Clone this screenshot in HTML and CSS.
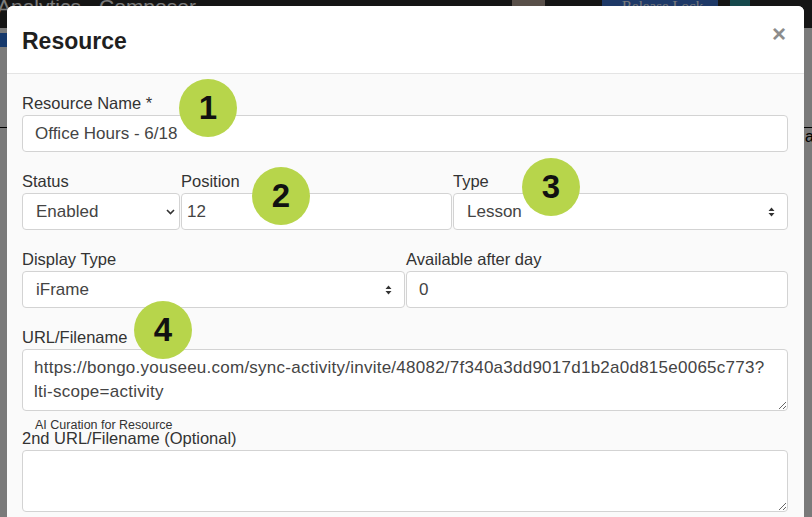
FILE: index.html
```html
<!DOCTYPE html>
<html lang="en">
<head>
    <meta charset="UTF-8">
    <meta name="viewport" content="width=device-width, initial-scale=1.0">
    <title>Resource</title>
    <link rel="stylesheet" href="styles.css">
</head>
<body>
    <!-- page behind the dialog -->
    <div class="app-bar">
        <span class="app-tab">Analytics</span>
        <span class="app-tab">Composer</span>
        <span class="app-spacer"></span>
        <span class="app-avatar"></span>
        <span class="lock-btn">Release Lock</span>
        <span class="app-thumb"></span>
    </div>
    <div class="app-sub">
        <span class="app-sub-btn"></span>
    </div>
    <div class="app-rule"></div>
    <div class="app-text">ar</div>

    <div class="backdrop"></div>

    <!-- Modal -->
    <div class="modal">
        <div class="modal-header">
            <h2 class="modal-title">Resource</h2>
            <span class="close-button">&times;</span>
        </div>

        <form class="modal-body">
            <div class="form-field">
                <label for="resName">Resource Name *</label>
                <input type="text" id="resName" class="control" value="Office Hours - 6/18">
            </div>

            <div class="form-row row-three">
                <div class="form-field">
                    <label for="resStatus">Status</label>
                    <div class="select-wrap">
                        <select id="resStatus" class="control select-status">
                            <option>Enabled</option>
                            <option>Disabled</option>
                        </select>
                        <svg class="select-arrow arrow-chevron" width="9" height="6" viewBox="0 0 9 6">
                            <path d="M1 1 L4.5 4.5 L8 1" fill="none" stroke="#333" stroke-width="1.6"/>
                        </svg>
                    </div>
                </div>
                <div class="form-field">
                    <label for="resPosition">Position</label>
                    <input type="number" id="resPosition" class="control control-position" value="12">
                </div>
                <div class="form-field">
                    <label for="resType">Type</label>
                    <div class="select-wrap">
                        <select id="resType" class="control">
                            <option>Lesson</option>
                        </select>
                        <svg class="select-arrow arrow-updown" width="7" height="10" viewBox="0 0 7 10">
                            <path d="M3.5 0.5 L6.5 4 L0.5 4 Z M3.5 9.5 L6.5 6 L0.5 6 Z" fill="#333"/>
                        </svg>
                    </div>
                </div>
            </div>

            <div class="form-row row-two">
                <div class="form-field">
                    <label for="resDisplay">Display Type</label>
                    <div class="select-wrap">
                        <select id="resDisplay" class="control control-display">
                            <option>iFrame</option>
                        </select>
                        <svg class="select-arrow arrow-updown" width="7" height="10" viewBox="0 0 7 10">
                            <path d="M3.5 0.5 L6.5 4 L0.5 4 Z M3.5 9.5 L6.5 6 L0.5 6 Z" fill="#333"/>
                        </svg>
                    </div>
                </div>
                <div class="form-field">
                    <label for="resAfter">Available after day</label>
                    <input type="number" id="resAfter" class="control" value="0">
                </div>
            </div>

            <div class="form-field field-url">
                <label for="resUrl">URL/Filename</label>
                <textarea id="resUrl" class="control control-area">https://bongo.youseeu.com/sync-activity/invite/48082/7f340a3dd9017d1b2a0d815e0065c773?
lti-scope=activity</textarea>
            </div>

            <div class="form-field">
                <label for="resUrl2" class="label-with-note">
                    <span class="ai-note">AI Curation for Resource</span>
                    2nd URL/Filename (Optional)
                </label>
                <textarea id="resUrl2" class="control control-area"></textarea>
            </div>
        </form>

        <!-- numbered callouts -->
        <span class="badge badge-1">1</span>
        <span class="badge badge-2">2</span>
        <span class="badge badge-3">3</span>
        <span class="badge badge-4">4</span>
    </div>
</body>
</html>
```

FILE: styles.css
```css
body {
    font-family: 'Liberation Sans', Arial, sans-serif;
    background-color: #fff;
    margin: 0;
    height: 517px;
    overflow: hidden;
    position: relative;
}

/* page behind the dialog */
.app-bar {
    height: 28px;
    background-color: #2c2c2c;
    display: flex;
    align-items: flex-start;
    overflow: hidden;
}

.app-tab {
    color: #fff;
    font-size: 21px;
    line-height: 14px;
    margin-right: 18px;
    white-space: nowrap;
}

.app-tab:first-child {
    margin-left: -3px;
}

.app-spacer {
    flex: 1;
}

.app-avatar {
    width: 33px;
    height: 12px;
    background-color: #b9a59a;
    margin-right: 57px;
}

.lock-btn {
    width: 116px;
    box-sizing: border-box;
    background-color: #3f78d8;
    color: #fff;
    font-family: 'Liberation Serif', serif;
    font-size: 15px;
    line-height: 12px;
    padding-left: 20px;
    margin-right: 12px;
    white-space: nowrap;
}

.app-thumb {
    width: 20px;
    height: 12px;
    background-color: #2f9aa0;
    margin-right: 62px;
}

.app-sub {
    height: 24px;
    padding-top: 5px;
}

.app-sub-btn {
    display: block;
    width: 40px;
    height: 14px;
    background-color: #2e75e0;
}

.app-rule {
    margin-top: 70px;
    height: 1px;
    background-color: #000;
}

.app-text {
    padding-left: 805px;
    font-size: 16px;
    color: #000;
    white-space: nowrap;
}

.backdrop {
    position: absolute;
    inset: 0;
    background-color: rgba(0, 0, 0, 0.52);
}

/* dialog */
.modal {
    position: absolute;
    top: 6px;
    left: 7px;
    width: 797px;
    height: 540px;
    background-color: #fafafa;
    border-radius: 6px;
    overflow: hidden;
}

.modal-header {
    height: 68px;
    box-sizing: border-box;
    background-color: #fff;
    border-bottom: 1px solid #e4e4e4;
    display: flex;
    justify-content: space-between;
    align-items: flex-start;
    padding: 0 18px 0 15px;
}

.modal-title {
    margin: 0;
    padding-top: 21px;
    font-size: 23px;
    line-height: 28px;
    font-weight: bold;
    color: #1f1f1f;
}

.close-button {
    padding-top: 16px;
    font-size: 24px;
    line-height: 24px;
    font-weight: bold;
    color: #8c8c8c;
}

.modal-body {
    padding: 19px 16px 0 15px;
}

.form-field {
    display: flex;
    flex-direction: column;
    margin-bottom: 19px;
    min-width: 0;
}

.form-row {
    display: flex;
    gap: 1px;
}

.field-url {
    margin-bottom: 17px;
}

.row-three .form-field:nth-child(1) { width: 158px; }
.row-three .form-field:nth-child(2) { width: 271px; }
.row-three .form-field:nth-child(3) { width: 335px; }

.row-two .form-field { flex: 1; }
.row-two .form-field:first-child { width: 383px; flex: none; }

label {
    font-size: 16.5px;
    line-height: 20px;
    color: #333;
    margin-bottom: 2px;
    white-space: nowrap;
}

.label-with-note {
    position: relative;
}

.ai-note {
    position: absolute;
    left: 13px;
    top: -10px;
    font-size: 12.5px;
    line-height: 14px;
    color: #333;
}

.control {
    display: block;
    width: 100%;
    height: 37px;
    box-sizing: border-box;
    border: 1px solid #d3d3d3;
    border-radius: 4px;
    background-color: #fff;
    font-family: 'Liberation Sans', Arial, sans-serif;
    font-size: 17px;
    color: #444;
    padding: 0 12px;
    margin: 0;
    outline: none;
}

input[type="number"] {
    -moz-appearance: textfield;
}

input[type="number"]::-webkit-inner-spin-button,
input[type="number"]::-webkit-outer-spin-button {
    -webkit-appearance: none;
    margin: 0;
}

.control-position {
    padding-left: 5px;
}

select.control {
    -webkit-appearance: none;
    appearance: none;
    padding-left: 13px;
}

.select-status {
    padding-left: 19px;
}

.control-display {
    padding-left: 11px;
}

.select-wrap {
    position: relative;
}

.select-arrow {
    position: absolute;
    pointer-events: none;
}

.arrow-chevron {
    right: 5px;
    top: 16px;
}

.arrow-updown {
    right: 13px;
    top: 14px;
}

.control-area {
    height: 62px;
    padding: 6px 11px;
    line-height: 24px;
    letter-spacing: 0.25px;
    resize: vertical;
    overflow: hidden;
    white-space: pre-wrap;
}

/* numbered callouts */
.badge {
    position: absolute;
    width: 58px;
    height: 58px;
    border-radius: 50%;
    background-color: #b7d54b;
    color: #111;
    font-size: 33px;
    font-weight: bold;
    display: flex;
    align-items: center;
    justify-content: center;
}

.badge-1 { left: 172px; top: 73px; }
.badge-2 { left: 245px; top: 161px; }
.badge-3 { left: 515px; top: 152px; }
.badge-4 { left: 127px; top: 295px; }
```
